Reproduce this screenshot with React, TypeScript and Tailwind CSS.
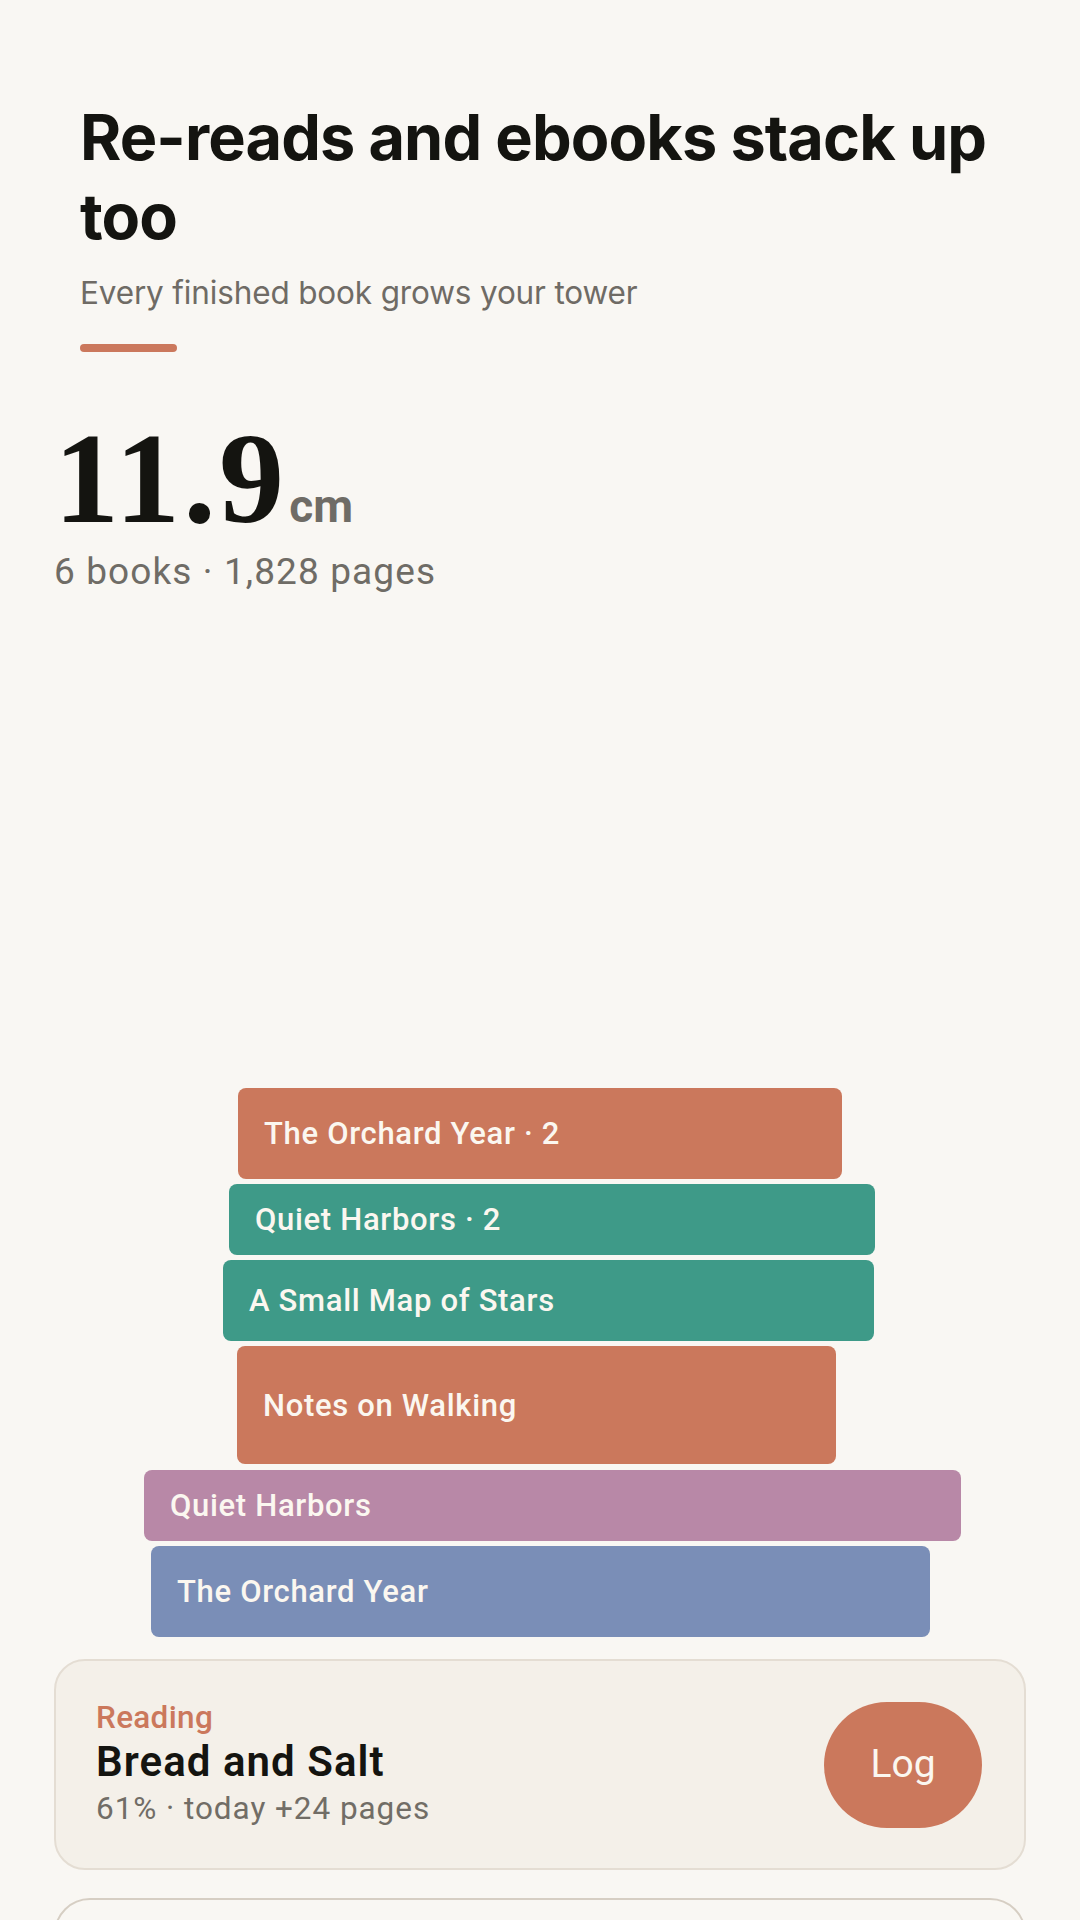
import React from "react";

type Book = {
  title: string;
  w: string;
  h: string;
  color: string;
  shift: string;
};

const books: Book[] = [
  { title: "The Orchard Year · 2", w: "w-[604px]", h: "h-[91px]", color: "bg-[#cb785c]", shift: "" },
  { title: "Quiet Harbors · 2", w: "w-[646px]", h: "h-[71px]", color: "bg-[#3e9a88]", shift: "ml-[24px]" },
  { title: "A Small Map of Stars", w: "w-[651px]", h: "h-[81px]", color: "bg-[#3e9a88]", shift: "ml-[17px]" },
  { title: "Notes on Walking", w: "w-[599px]", h: "h-[118px]", color: "bg-[#cb785c]", shift: "mr-[7px]" },
  { title: "Quiet Harbors", w: "w-[817px]", h: "h-[71px]", color: "bg-[#b888a7]", shift: "ml-[25px]" },
  { title: "The Orchard Year", w: "w-[779px]", h: "h-[91px]", color: "bg-[#7a8eb7]", shift: "ml-[1px]" },
];

export default function App() {
  return (
    <div className="h-[1920px] w-[1080px] overflow-hidden bg-[#f9f7f3] font-['Roboto',sans-serif]">
      <div className="px-[54px]">
        {/* Header */}
        <div className="px-[26px] pt-[98px]">
          <h1 className="font-['Inter',sans-serif] text-[63px] font-bold leading-[79px] tracking-[-0.014em] text-[#141410]">
            Re-reads and ebooks stack up too
          </h1>
          <p className="mt-[16px] font-['Inter',sans-serif] text-[31.5px] leading-[41px] tracking-[-0.005em] text-[#6f6b65]">
            Every finished book grows your tower
          </p>
          <div className="mt-[31px] h-[8px] w-[97px] rounded-full bg-[#cb785c]" />
        </div>

        {/* Stats */}
        <div className="mt-[62px]">
          <div className="flex items-baseline">
            <span className="font-['Liberation_Serif',serif] text-[130px] font-bold leading-[128px] tracking-[0.025em] text-[#141410]">
              11.9
            </span>
            <span className="ml-[2px] font-['Roboto',sans-serif] text-[46px] font-bold leading-none text-[#6f6c66]">
              cm
            </span>
          </div>
          <p className="mt-[6px] text-[37px] leading-[48px] tracking-[0.03em] text-[#6f6c66]">
            6 books · 1,828 pages
          </p>
        </div>

        {/* Tower */}
        <div className="flex h-[1041px] flex-col items-center justify-end gap-[5.3px]">
          {books.map((b, i) => (
            <div
              key={i}
              className={`${b.w} ${b.h} ${b.color} ${b.shift} flex shrink-0 items-center rounded-[8px] pl-[26px]`}
            >
              <span className="text-[31px] font-medium leading-none tracking-[0.022em] text-[#fbf7f0]">{b.title}</span>
            </div>
          ))}
        </div>

        {/* Reading card */}
        <div className="mt-[22px] flex h-[211px] items-center justify-between rounded-[31px] border-2 border-[#e4ddd3] bg-[#f4f0e9] pl-[40px] pr-[42px]">
          <div className="flex flex-col">
            <span className="text-[31.5px] font-medium leading-[39.4px] tracking-[0.01em] text-[#cb785c]">Reading</span>
            <span className="text-[42px] font-semibold leading-[50.4px] tracking-[0.025em] text-[#141410]">Bread and Salt</span>
            <span className="text-[31.5px] leading-[44px] tracking-[0.03em] text-[#716d66]">61% · today +24 pages</span>
          </div>
          <button className="flex h-[126px] w-[158px] items-center justify-center rounded-full bg-[#cb785c] text-[39px] text-[#fbf7f0]">
            Log
          </button>
        </div>

        {/* Next card (partially visible) */}
        <div className="mt-[27.6px] h-[200px] rounded-[36px] border-2 border-[#d6cec3] bg-[#f9f7f3]" />
      </div>
    </div>
  );
}
